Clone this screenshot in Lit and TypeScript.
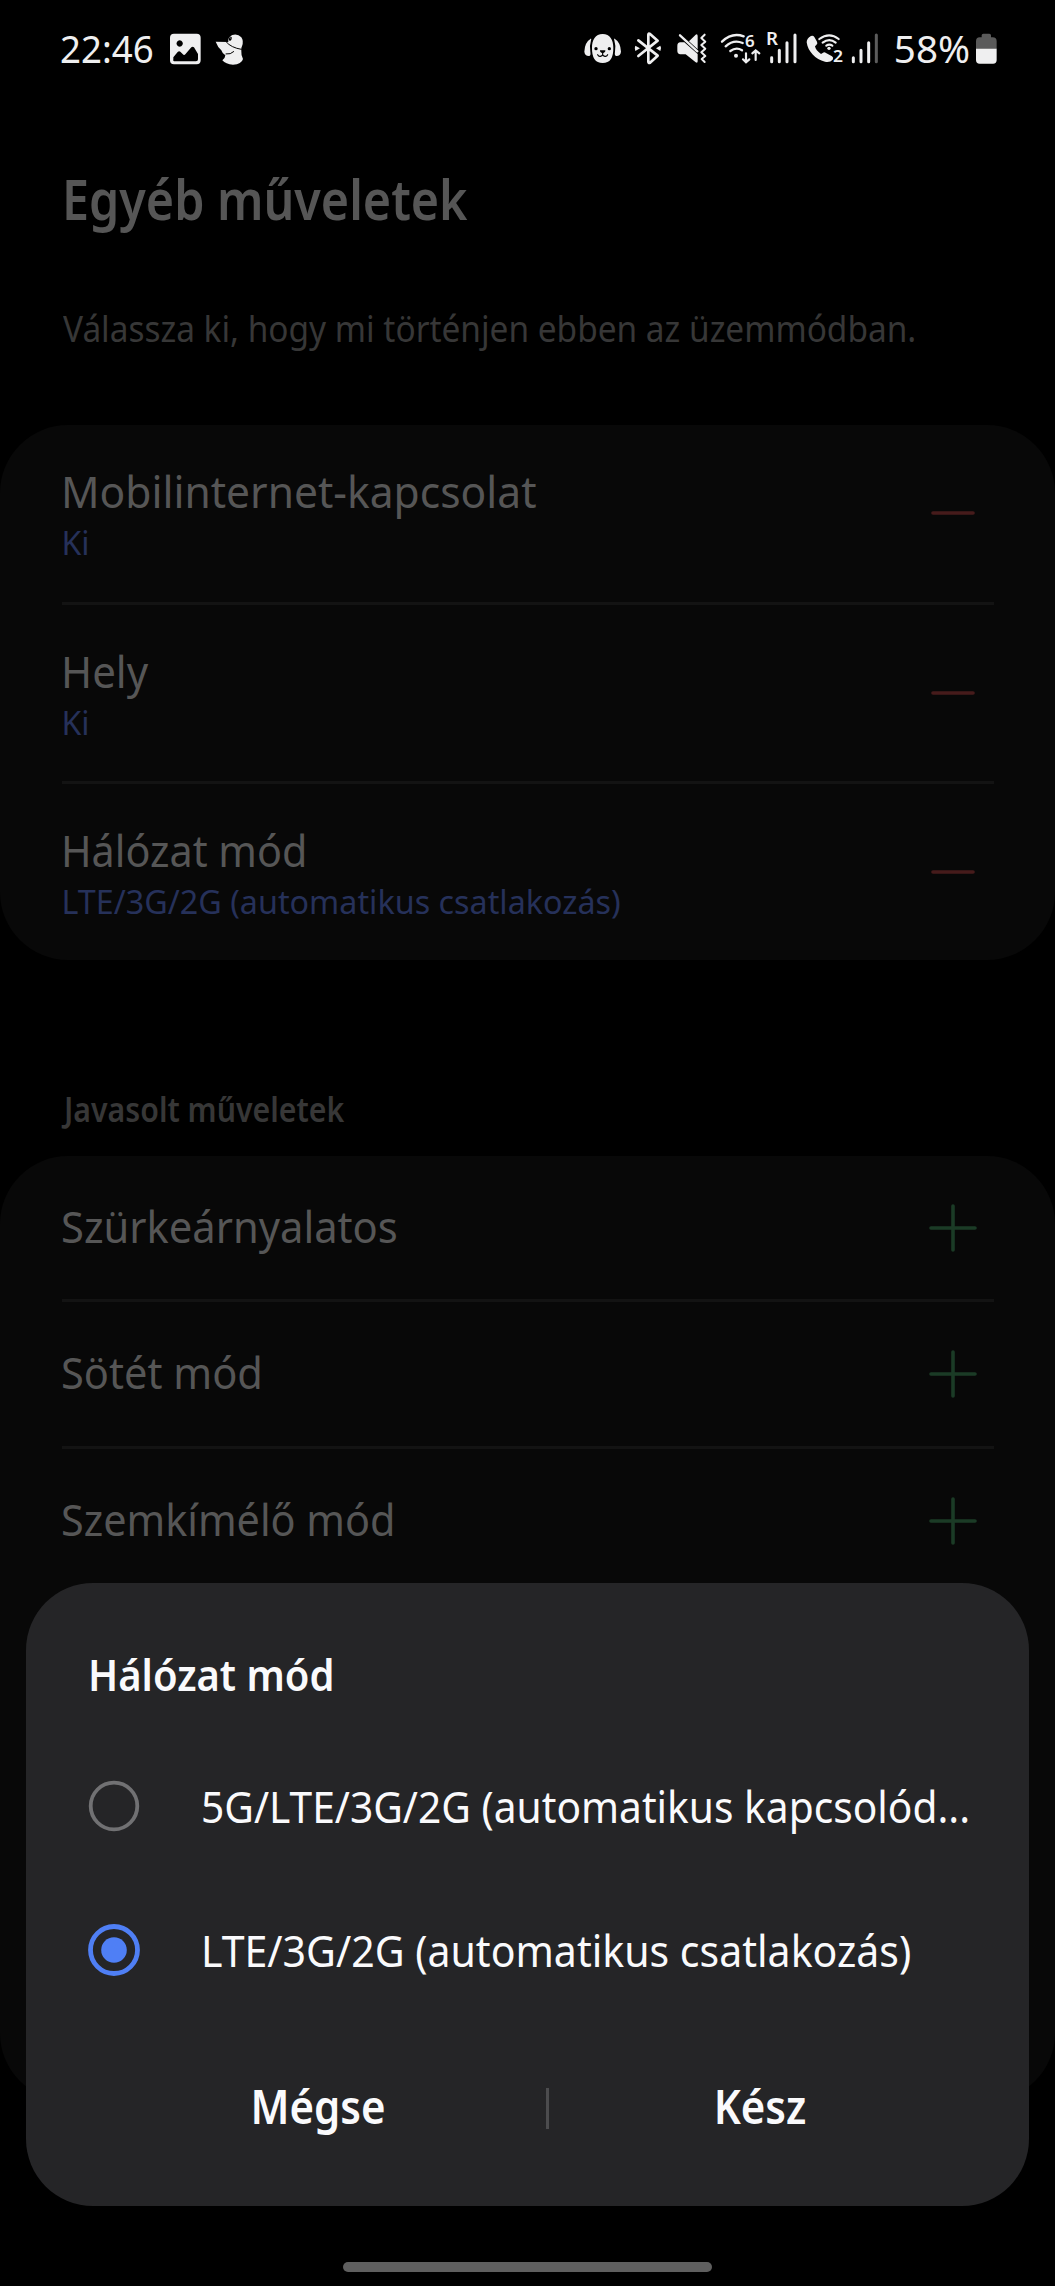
import { LitElement, html, svg, css, TemplateResult } from "lit";
import { customElement, property, state } from "lit/decorators.js";
import { styleMap } from "lit/directives/style-map.js";

interface Action {
  title: string;
  scale: number;
  value?: string;
  valueScale?: number;
}

const ACTIVE: Action[] = [
  { title: "Mobilinternet-kapcsolat", scale: 0.967, value: "Ki", valueScale: 0.97 },
  { title: "Hely", scale: 0.955, value: "Ki", valueScale: 0.97 },
  { title: "Hálózat mód", scale: 0.939, value: "LTE/3G/2G (automatikus csatlakozás)", valueScale: 0.979 },
];

const SUGGESTED: Action[] = [
  { title: "Szürkeárnyalatos", scale: 0.948 },
  { title: "Sötét mód", scale: 0.945 },
  { title: "Szemkímélő mód", scale: 0.94 },
];

const OPTIONS = [
  { label: "5G/LTE/3G/2G (automatikus kapcsolód...", scale: 0.925 },
  { label: "LTE/3G/2G (automatikus csatlakozás)", scale: 0.9325 },
];

const squeeze = (scale: number) => styleMap({ transform: `scaleX(${scale})` });

/* Status icons share one vertical grid: three units per pixel, y from 28 to 148. */
const glyph = (x: number, width: number, body: TemplateResult) => html`
  <svg class="glyph" width=${width / 3} height="40" viewBox="${x} 28 ${width} 120">${body}</svg>
`;

const GALLERY = glyph(391, 92, svg`
  <path fill="currentColor" fill-rule="evenodd" d="M403 42H471Q483 42 483 54V122Q483 134 471 134H403Q391 134 391 122V54Q391 42 403 42Z
    M420 62a9.500 9.500 0 1 0 .1 0Z M401 119Q399 125 406 125H469Q475 125 475 119V103L463 83Q459 79 455 83L437 104Q433 108 429 103L422 96Q418 93 414 97L401 113Z"/>`);

const BIRD = glyph(524, 86, svg`
  <path fill="currentColor" d="M526 66L564 67Q562 52 576 46Q592 41 603 53Q611 64 605 80Q602 84 603 94Q602 108 608 118Q604 134 578 135Q556 134 546 122Q555 115 555 107Q546 102 543 92Q532 82 526 66Z"/>
  <path fill="none" stroke="#000" stroke-width="3" stroke-linecap="round" d="M558 67Q572 84 603 89M557 103Q571 105 580 96"/>
  <ellipse cx="570" cy="57" rx="4" ry="6.500" fill="#000" transform="rotate(20 570 57)"/><circle cx="570" cy="55" r="1.500" fill="currentColor"/>`);

const DOG = glyph(41, 112, svg`
  <path fill="currentColor" d="M61 57Q64 56 62 62Q57 78 60 96Q62 107 57 109Q44 110 42 96Q43 68 61 57ZM133 57Q130 56 132 62Q137 78 134 96Q132 107 137 109Q150 110 152 96Q151 68 133 57Z"/>
  <path fill="currentColor" d="M97 43C119 43 129 61 129 84Q130 130 97 130Q64 130 65 84C65 61 75 43 97 43Z"/>
  <circle cx="77" cy="87" r="5" fill="#000"/><circle cx="117" cy="87" r="5" fill="#000"/>
  <path d="M89 92H105Q106 98 97 101Q88 98 89 92Z" fill="#000"/>
  <path d="M97 100V105M82 105Q85 111 90 110Q96 109 97 105Q98 109 104 110Q109 111 112 105" fill="none" stroke="#000" stroke-width="3.500" stroke-linecap="round"/>`);

const BLUETOOTH = glyph(192, 84, svg`
  <path d="M205 62L263 108L240 129Q235 131 235 126V46Q235 40 240 43L263 63L205 109" fill="none" stroke="currentColor" stroke-width="8" stroke-linejoin="round" stroke-linecap="round"/>
  <path d="M196 78L210 86L196 94Q192 86 196 78ZM271 78L258 86L271 94Q276 86 271 78Z" fill="currentColor"/>`);

const MUTE = glyph(320, 92, svg`
  <path d="M376 45Q382 42 382 49V89L356 65ZM330 68H342L382 103V125Q382 132 376 128L346 104H330Q321 103 321 94V78Q321 69 330 68Z" fill="currentColor"/>
  <path d="M329 47L381 95" stroke="currentColor" stroke-width="7" stroke-linecap="round"/>
  <path d="M403 45L393 55L405 66L393 76L405 87L393 98L405 109L394 118L403 127" fill="none" stroke="currentColor" stroke-width="6" stroke-linecap="round" stroke-linejoin="round"/>`);

const WIFI = glyph(450, 124, svg`
  <g fill="none" stroke="currentColor" stroke-width="7" stroke-linecap="round">
    <path d="M456 66Q486 37 521 50M467 80Q491 58 518 70M481 94Q499 81 516 92"/>
    <path stroke-width="6.500" d="M528 101V127M519 119L528 128L538 119M557 121V94M547 101L557 92L568 101"/>
  </g>
  <circle cx="498" cy="108" r="6" fill="currentColor"/>
  <text class="tag" x="525" y="82" font-size="46" textLength="29" lengthAdjust="spacingAndGlyphs">6</text>`);

const ROAMING = glyph(588, 92, svg`
  <g fill="none" stroke="currentColor" stroke-width="9" stroke-linecap="round">
    <path d="M605 114V126M628 92V126M651 69V126M675 46V126"/>
  </g>
  <text class="tag" x="588" y="77" font-size="52" textLength="36" lengthAdjust="spacingAndGlyphs">R</text>`);

const WIFI_CALL = glyph(76, 112, svg`
  <path fill="currentColor" d="M91 49Q97 46 101 52L109 66Q112 72 107 76L103 80Q105 92 121 103L126 100Q131 96 136 100L154 110Q160 114 156 120Q148 129 133 126C104 119 82 96 78 68Q78 56 91 49Z"/>
  <path d="M116 58Q146 36 174 58M126 69Q146 54 165 69M137 78Q146 72 155 78" fill="none" stroke="currentColor" stroke-width="6.500" stroke-linecap="round"/>
  <circle cx="145" cy="86" r="5" fill="currentColor"/>
  <text class="tag" x="157" y="126" font-size="49" textLength="30" lengthAdjust="spacingAndGlyphs">2</text>`);

const SIGNAL = glyph(212, 84, svg`
  <g fill="none" stroke="currentColor" stroke-width="9" stroke-linecap="round">
    <path d="M219 114V126M242 92V126M265 69V126"/><path d="M288 46V126" stroke="#5c5c5c"/>
  </g>`);

const BATTERY = glyph(588, 62, svg`
  <path d="M588 88V65Q588 53 599 53H605V47Q605 42 610 42H628Q633 42 633 47V53H638Q650 53 650 65V88Z" fill="#5a5a5a"/>
  <path d="M588 87H650V121Q650 132 639 132H599Q588 132 588 121Z" fill="currentColor"/>`);

@customElement("status-bar")
export class StatusBar extends LitElement {
  static styles = css`
    :host {
      display: flex;
      justify-content: space-between;
      align-items: center;
      box-sizing: border-box;
      height: 98px;
      padding: 0 58px 0 59.5px;
      color: #efeff0;
      font: 400 38.6px/48px "Noto Sans", sans-serif;
    }
    .side { display: flex; align-items: center; }
    .glyph { display: block; flex: none; overflow: visible; }
    .tag { fill: currentColor; font-family: "Noto Sans", sans-serif; font-weight: 600; }
    .time { width: 97px; margin-bottom: 3px; transform: scaleX(0.95); transform-origin: left; }
    .left { gap: 13.7px; }
    .battery-level { margin: 0 6.3px 3px 15px; }
    .g1 { margin-left: 13px; }
    .g2 { margin-left: 14.7px; }
    .g3 { margin-left: 12.7px; }
    .g4 { margin-left: 4.7px; }
    .g5 { margin-left: 8.7px; }
    .g6 { margin-left: 8px; }
  `;

  render() {
    return html`
      <div class="side left"><span class="time">22:46</span>${GALLERY}${BIRD}</div>
      <div class="side">
        ${DOG}<span class="g1">${BLUETOOTH}</span><span class="g2">${MUTE}</span
        ><span class="g3">${WIFI}</span><span class="g4">${ROAMING}</span
        ><span class="g5">${WIFI_CALL}</span><span class="g6">${SIGNAL}</span>
        <span class="battery-level">58%</span>${BATTERY}
      </div>
    `;
  }
}

@customElement("action-card")
export class ActionCard extends LitElement {
  static styles = css`
    :host {
      display: block;
      box-sizing: border-box;
      border-radius: 68px;
      background: #080808;
      color: #565656;
      font-family: "Noto Sans", sans-serif;
    }
    .row {
      display: flex;
      align-items: center;
      justify-content: space-between;
      box-sizing: border-box;
      height: 143.5px;
      padding: 0 78px 0 61px;
    }
    .row.tall { height: 176.4px; }
    .divider { height: 3px; margin: 0 61px 0 62px; background: #131313; }
    .labels { display: flex; flex-direction: column; padding-bottom: 4px; }
    .tall .labels { padding: 6px 0 0; }
    .title, .value { white-space: nowrap; transform-origin: left; }
    .title { font-size: 44px; line-height: 54px; }
    .value { font-size: 33px; line-height: 50px; padding-left: 0.5px; color: #26315a; }
    .icon { display: block; }
    .remove { stroke: #461b1b; }
    .add { stroke: #1b3b26; }
  `;

  @property({ attribute: false }) actions: Action[] = [];
  @property() kind: "add" | "remove" = "add";

  private icon() {
    return svg`<path d=${this.kind === "add" ? "M2 25H46M24 3V47" : "M4 25H44"} />`;
  }

  render() {
    return this.actions.map(
      (a, i) => html`
        ${i ? html`<div class="divider"></div>` : ""}
        <div class="row ${a.value ? "tall" : ""}">
          <div class="labels">
            <span class="title" style=${squeeze(a.scale)}>${a.title}</span>
            ${a.value ? html`<span class="value" style=${squeeze(a.valueScale ?? 1)}>${a.value}</span>` : ""}
          </div>
          <svg class="icon ${this.kind}" width="48" height="50" viewBox="0 0 48 50" stroke-width="3.6" stroke-linecap="round">
            ${this.icon()}
          </svg>
        </div>
      `
    );
  }
}

@customElement("mode-dialog")
export class ModeDialog extends LitElement {
  static styles = css`
    :host {
      display: flex;
      flex-direction: column;
      box-sizing: border-box;
      border-radius: 67px;
      background: #252527;
      color: #fafafc;
      font-family: "Noto Sans", sans-serif;
    }
    .heading {
      height: 60px;
      margin: 61px 0 30px 61.5px;
      font-size: 44px;
      line-height: 60px;
      font-weight: 600;
      transform: scaleX(0.908);
      transform-origin: left;
    }
    .option { display: flex; align-items: center; height: 144px; padding-left: 60.7px; }
    .radio { display: block; flex: none; margin-right: 60.5px; }
    .label { font-size: 44px; line-height: 60px; white-space: nowrap; transform-origin: left; }
    .buttons {
      display: grid;
      grid-template-columns: 456px 3px 422px;
      align-items: center;
      height: 100px;
      margin: 36px 0 0 64px;
    }
    .button { font-size: 46px; line-height: 60px; font-weight: 600; text-align: center; transform: translateY(-2px) scaleX(0.912); }
    .bar { height: 41px; background: #4c4c4e; }
  `;

  @state() private selected = 1;

  private radio(on: boolean) {
    return html`<svg class="radio" width="54" height="54" viewBox="0 0 54 54">
      ${on
        ? svg`<circle cx="27" cy="27" r="23.500" fill="none" stroke="#4f7ff5" stroke-width="4.800"/><circle cx="27" cy="27" r="12.800" fill="#4f7ff5"/>`
        : svg`<circle cx="27" cy="27" r="23.300" fill="none" stroke="#717173" stroke-width="3.800"/>`}
    </svg>`;
  }

  render() {
    return html`
      <div class="heading">Hálózat mód</div>
      ${OPTIONS.map(
        (o, i) => html`
          <div class="option" @click=${() => (this.selected = i)}>
            ${this.radio(i === this.selected)}
            <span class="label" style=${squeeze(o.scale)}>${o.label}</span>
          </div>
        `
      )}
      <div class="buttons">
        <span class="button">Mégse</span><span class="bar"></span><span class="button">Kész</span>
      </div>
    `;
  }
}

@customElement("app-root")
export class AppRoot extends LitElement {
  static styles = css`
    :host {
      display: block;
      position: relative;
      width: 1055px;
      height: 2286px;
      overflow: hidden;
      background: #000;
      font-family: "Noto Sans", sans-serif;
    }
    .page { display: flex; flex-direction: column; }
    .heading, .hint, .section { white-space: nowrap; transform-origin: left; }
    .heading {
      margin: 65px 0 0 62px;
      font-size: 55.5px;
      line-height: 72px;
      font-weight: 600;
      color: #565656;
      transform: scaleX(0.872);
    }
    .hint {
      margin: 68.5px 0 0 63px;
      font-size: 35.5px;
      line-height: 48px;
      color: #373737;
      transform: scaleX(0.941);
    }
    .active { height: 534.3px; margin-top: 73.8px; }
    .section {
      margin: 126.7px 0 0 64px;
      font-size: 34px;
      line-height: 46px;
      font-weight: 600;
      color: #373737;
      transform: scaleX(0.89);
    }
    .suggested { height: 945px; margin-top: 23.7px; }
    .dialog { position: absolute; left: 26px; top: 1583px; width: 1003px; height: 622.5px; }
    .home { position: absolute; left: 343px; top: 2262px; width: 368.5px; height: 10px; border-radius: 5px; background: #5f5f5f; }
  `;

  render() {
    return html`
      <div class="page">
        <status-bar></status-bar>
        <div class="heading">Egyéb műveletek</div>
        <div class="hint">Válassza ki, hogy mi történjen ebben az üzemmódban.</div>
        <action-card class="active" kind="remove" .actions=${ACTIVE}></action-card>
        <div class="section">Javasolt műveletek</div>
        <action-card class="suggested" kind="add" .actions=${SUGGESTED}></action-card>
      </div>
      <mode-dialog class="dialog"></mode-dialog>
      <div class="home"></div>
    `;
  }
}
